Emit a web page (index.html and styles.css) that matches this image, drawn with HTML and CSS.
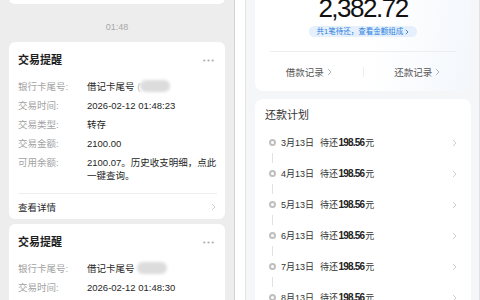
FILE: index.html
```html
<!DOCTYPE html>
<html lang="zh-CN">
<head>
<meta charset="utf-8">
<link rel="stylesheet" href="styles.css">
</head>
<body>
<div class="screen">
  <div class="chat">
    <div class="card card-top"></div>
    <div class="time">01:48</div>

    <div class="card msg">
      <div class="msg-head">
        <span class="msg-title">交易提醒</span>
        <svg class="more" width="11" height="3" viewBox="0 0 11 3"><circle cx="1.3" cy="1.5" r="1.1"/><circle cx="5.5" cy="1.5" r="1.1"/><circle cx="9.7" cy="1.5" r="1.1"/></svg>
      </div>
      <div class="rows">
        <div class="row"><span class="lbl">银行卡尾号:</span><span class="val">借记卡尾号 <span class="paren">(</span><span class="blur"></span></span></div>
        <div class="row"><span class="lbl">交易时间:</span><span class="val">2026-02-12 01:48:23</span></div>
        <div class="row"><span class="lbl">交易类型:</span><span class="val">转存</span></div>
        <div class="row"><span class="lbl">交易金额:</span><span class="val">2100.00</span></div>
        <div class="row"><span class="lbl">可用余额:</span><span class="val">2100.07。历史收支明细，点此一键查询。</span></div>
      </div>
      <div class="msg-foot">
        <span>查看详情</span>
        <svg class="chev-lite" width="5" height="8" viewBox="0 0 5 8"><path d="M1 1l3 3-3 3"/></svg>
      </div>
    </div>

    <div class="card msg">
      <div class="msg-head">
        <span class="msg-title">交易提醒</span>
        <svg class="more" width="11" height="3" viewBox="0 0 11 3"><circle cx="1.3" cy="1.5" r="1.1"/><circle cx="5.5" cy="1.5" r="1.1"/><circle cx="9.7" cy="1.5" r="1.1"/></svg>
      </div>
      <div class="rows">
        <div class="row"><span class="lbl">银行卡尾号:</span><span class="val">借记卡尾号 <span class="blur"></span></span></div>
        <div class="row"><span class="lbl">交易时间:</span><span class="val">2026-02-12 01:48:30</span></div>
        <div class="row"><span class="lbl">交易类型:</span><span class="val">转存</span></div>
      </div>
    </div>
  </div>

  <div class="gutter"></div>

  <div class="loan">
    <div class="summary">
      <div class="amount">2,382.72</div>
      <div class="pill-wrap"><span class="pill">共1笔待还，查看金额组成 <svg width="4" height="6" viewBox="0 0 4 6"><path d="M0.8 0.8l2.2 2.2-2.2 2.2"/></svg></span></div>
      <div class="divider"></div>
      <div class="links">
        <div class="link">借款记录 <svg class="chev" width="5" height="8" viewBox="0 0 5 8"><path d="M1 1l3 3-3 3"/></svg></div>
        <div class="sep"></div>
        <div class="link">还款记录 <svg class="chev" width="5" height="8" viewBox="0 0 5 8"><path d="M1 1l3 3-3 3"/></svg></div>
      </div>
    </div>

    <div class="plan">
      <div class="plan-title">还款计划</div>
      <div class="tl">
        <div class="tl-row"><span class="dot"></span><span class="date">3月13日</span><span class="due">待还<b>198.56</b>元</span><svg class="chev-lite end" width="5" height="8" viewBox="0 0 5 8"><path d="M1 1l3 3-3 3"/></svg></div>
        <div class="tl-row"><span class="dot"></span><span class="date">4月13日</span><span class="due">待还<b>198.56</b>元</span><svg class="chev-lite end" width="5" height="8" viewBox="0 0 5 8"><path d="M1 1l3 3-3 3"/></svg></div>
        <div class="tl-row"><span class="dot"></span><span class="date">5月13日</span><span class="due">待还<b>198.56</b>元</span><svg class="chev-lite end" width="5" height="8" viewBox="0 0 5 8"><path d="M1 1l3 3-3 3"/></svg></div>
        <div class="tl-row"><span class="dot"></span><span class="date">6月13日</span><span class="due">待还<b>198.56</b>元</span><svg class="chev-lite end" width="5" height="8" viewBox="0 0 5 8"><path d="M1 1l3 3-3 3"/></svg></div>
        <div class="tl-row"><span class="dot"></span><span class="date">7月13日</span><span class="due">待还<b>198.56</b>元</span><svg class="chev-lite end" width="5" height="8" viewBox="0 0 5 8"><path d="M1 1l3 3-3 3"/></svg></div>
        <div class="tl-row"><span class="dot"></span><span class="date">8月13日</span><span class="due">待还<b>198.56</b>元</span><svg class="chev-lite end" width="5" height="8" viewBox="0 0 5 8"><path d="M1 1l3 3-3 3"/></svg></div>
      </div>
    </div>
  </div>
</div>
</body>
</html>
```

FILE: styles.css
```css
html, body {
  margin: 0;
  padding: 0;
}
body {
  font-family: "Liberation Sans", "Noto Sans CJK SC", sans-serif;
  color: #222;
}
.screen {
  display: flex;
  width: 480px;
  height: 300px;
  overflow: hidden;
}

/* left: chat */
.chat {
  width: 235px;
  flex-shrink: 0;
  box-sizing: border-box;
  background: #ededed;
  border-right: 1px solid #d2d2d2;
  padding: 0 9px 0 9px;
}
.card {
  background: #fff;
  border-radius: 6px;
}
.card-top {
  height: 24px;
  margin-top: -20px;
}
.time {
  margin-top: 16px;
  line-height: 14px;
  font-size: 9px;
  color: #a9a9a9;
  text-align: center;
}
.msg {
  margin-top: 8px;
  padding: 0 8px 0 9px;
}
.msg + .msg {
  margin-top: 5px;
}
.msg-head {
  display: flex;
  justify-content: space-between;
  align-items: center;
  padding-top: 10px;
  height: 16px;
}
.msg-title {
  font-size: 11px;
  line-height: 16px;
  font-weight: 700;
  color: #1e1e1e;
}
.more {
  fill: #ababab;
  margin-right: 3px;
}
.rows {
  display: flex;
  flex-direction: column;
  gap: 6px;
  margin-top: 12px;
  padding-bottom: 11px;
  border-bottom: 1px solid #eeeeee;
}
.row {
  display: flex;
  font-size: 9.5px;
  line-height: 13px;
}
.lbl {
  width: 69px;
  flex-shrink: 0;
  color: #a3a3a3;
}
.val {
  color: #1f1f1f;
}
.paren {
  color: #bbb;
}
.blur {
  display: inline-block;
  width: 30px;
  height: 12px;
  vertical-align: -2px;
  border-radius: 6px;
  background: #dcdcdc;
  filter: blur(1.5px);
}
.msg-foot {
  display: flex;
  justify-content: space-between;
  align-items: center;
  height: 25px;
  font-size: 9.5px;
  color: #1f1f1f;
  padding-right: 1px;
}
.chev-lite {
  fill: none;
  stroke: #cfcfcf;
  stroke-width: 1;
}

/* gutter */
.gutter {
  width: 10px;
  flex-shrink: 0;
  background: #fff;
  border-right: 1px solid #e3e3e3;
}

/* right: loan */
.loan {
  width: 234px;
  flex-shrink: 0;
  box-sizing: border-box;
  background: #f5f6f8;
  border-right: 1px solid #e2e2e2;
  padding: 0 8px 0 9px;
}
.summary {
  margin-top: -7px;
  background: linear-gradient(100deg, #ffffff 55%, #f3f7fc 100%);
  border-radius: 0 0 8px 8px;
}
.amount {
  text-align: center;
  font-size: 26px;
  line-height: 30px;
  letter-spacing: -1.5px;
  color: #111;
}
.pill-wrap {
  text-align: center;
  margin-top: 3px;
  height: 11px;
}
.pill {
  display: inline-block;
  height: 11px;
  line-height: 11px;
  padding: 0 8px;
  font-size: 7.5px;
  color: #2b7fe0;
  background: #e5f0fc;
  border-radius: 6px;
  vertical-align: top;
}
.pill svg {
  fill: none;
  stroke: #2b7fe0;
  stroke-width: 0.9;
  vertical-align: -0.5px;
}
.divider {
  margin: 14px 15px 0;
  border-top: 1px solid #eeeeee;
}
.links {
  display: grid;
  grid-template-columns: 1fr 1px 1fr;
  align-items: center;
  height: 39px;
}
.link {
  display: flex;
  justify-content: center;
  align-items: center;
  gap: 3px;
  font-size: 9.5px;
  color: #555;
}
.chev {
  fill: none;
  stroke: #b5b5b5;
  stroke-width: 1;
}
.sep {
  height: 10px;
  background: #ececec;
}
.plan {
  margin-top: 8px;
  background: #fff;
  border-radius: 8px;
  padding: 9px 10px 0;
  height: 260px;
}
.plan-title {
  font-size: 11px;
  line-height: 14px;
  color: #333;
}
.tl {
  margin-top: 5px;
}
.tl-row {
  position: relative;
  display: flex;
  align-items: center;
  height: 31px;
  padding-left: 4px;
  font-size: 9px;
  color: #333;
}
.tl-row:not(:last-child)::after {
  content: "";
  position: absolute;
  left: 7px;
  top: 25.5px;
  width: 1px;
  height: 10px;
  background: #e2e2e2;
}
.dot {
  width: 7px;
  height: 7px;
  box-sizing: border-box;
  border: 2px solid #bfbfbf;
  border-radius: 50%;
  background: #fff;
  flex-shrink: 0;
}
.date {
  margin-left: 5px;
}
.due {
  margin-left: 6px;
}
.due b {
  font-size: 10px;
  font-weight: 700;
  letter-spacing: -0.8px;
  color: #222;
  margin: 0 1px 0 0.5px;
}
.end {
  margin-left: auto;
  margin-right: 4px;
}
```
